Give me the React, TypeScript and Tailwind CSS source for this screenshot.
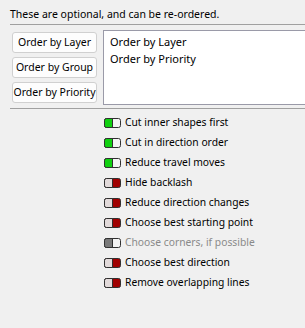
const options: { label: string; state: 'on' | 'off' | 'disabled' }[] = [
  { label: 'Cut inner shapes first', state: 'on' },
  { label: 'Cut in direction order', state: 'on' },
  { label: 'Reduce travel moves', state: 'on' },
  { label: 'Hide backlash', state: 'off' },
  { label: 'Reduce direction changes', state: 'off' },
  { label: 'Choose best starting point', state: 'off' },
  { label: 'Choose corners, if possible', state: 'disabled' },
  { label: 'Choose best direction', state: 'off' },
  { label: 'Remove overlapping lines', state: 'off' },
];

const Toggle = ({ state }: { state: 'on' | 'off' | 'disabled' }) => {
  const left = state === 'on' ? '#10d010' : state === 'off' ? '#e2dada' : '#7a7a7a';
  const right = state === 'off' ? '#a00000' : '#f4f4f4';
  return (
    <svg width="17" height="10" viewBox="0 0 17 10" className="shrink-0">
      <rect x="0.5" y="0.5" width="16" height="9" rx="2" fill={right} stroke="#303030" />
      <path d="M2.5 0.5 H8.5 V9.5 H2.5 A2 2 0 0 1 0.5 7.5 V2.5 A2 2 0 0 1 2.5 0.5 Z" fill={left} stroke="#303030" />
    </svg>
  );
};

const buttons = ['Order by Layer', 'Order by Group', 'Order by Priority'];

export default function App() {
  return (
    <div
      className="w-[305px] h-[328px] bg-[#f0f0f0] text-[10.5px] text-black overflow-hidden"
      style={{ fontFamily: '"Noto Sans", sans-serif' }}
    >
      <div className="pl-[10px] pt-[7px] leading-[15px]">These are optional, and can be re-ordered.</div>
      <div className="ml-[10px] mt-[2px] h-px bg-[#a0a0a0]" />
      <div className="flex pl-[12px] pt-[5px] gap-[6px]">
        <div className="flex flex-col gap-[4px] pt-[2px] w-[85px] shrink-0">
          {buttons.map((b) => (
            <button
              key={b}
              className="h-[21px] w-[85px] px-0 text-center whitespace-nowrap rounded-[3px] border border-[#d0d0d0] bg-[#fdfdfd] leading-[19px]"
            >
              {b}
            </button>
          ))}
        </div>
        <div className="flex-1 h-[75px] border border-[#9a9aa8] border-r-0 bg-white pl-[6px] pt-[2px] leading-[17px] text-[11px]">
          <div>Order by Layer</div>
          <div>Order by Priority</div>
        </div>
      </div>
      <div className="ml-[10px] mt-[3px] h-px bg-[#a0a0a0]" />
      <div className="flex flex-col pl-[104px] pt-[4px]">
        {options.map((o) => (
          <div
            key={o.label}
            className={`flex items-center gap-[4px] h-[20px] ${o.state === 'disabled' ? 'text-[#8a8a8a]' : ''}`}
          >
            <Toggle state={o.state} />
            <span className="text-[10.3px]">{o.label}</span>
          </div>
        ))}
      </div>
    </div>
  );
}
